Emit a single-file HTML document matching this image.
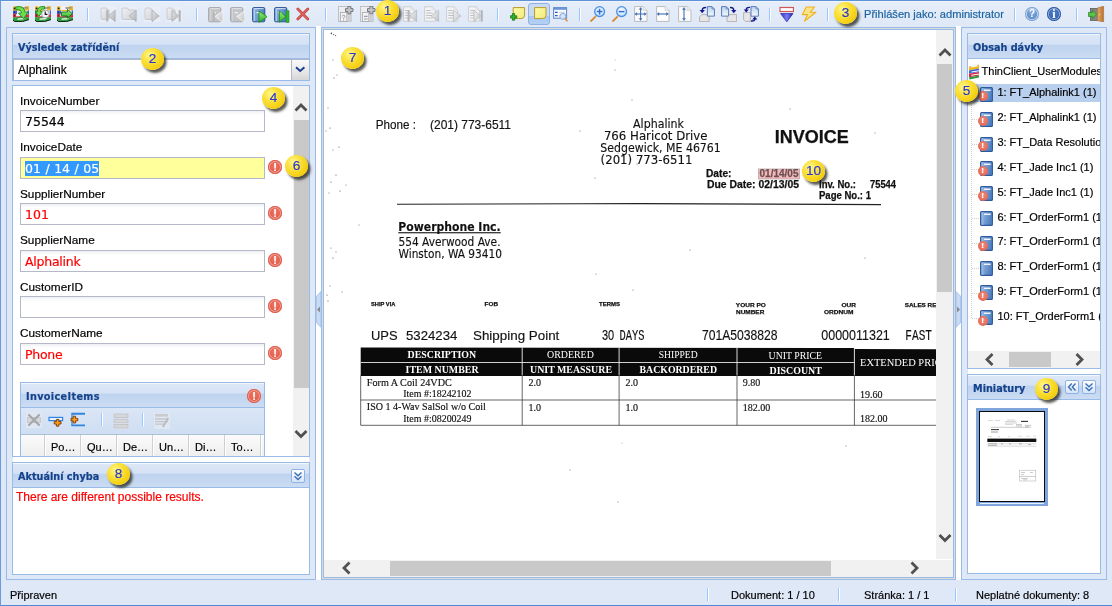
<!DOCTYPE html>
<html lang="cs">
<head>
<meta charset="utf-8">
<title>Thin Client</title>
<style>
*{box-sizing:border-box;margin:0;padding:0}
html,body{width:1112px;height:606px;overflow:hidden}
body{-webkit-text-stroke:.18px;background:#dfe8f6;font-family:"Liberation Sans",sans-serif;font-size:12px;color:#000;position:relative}
body>*{will-change:transform}
.abs{position:absolute}
#frame{position:absolute;left:0;top:0;width:1112px;height:606px;border-top:1px solid #5f93d8;border-left:1px solid #6a9bdc;border-bottom:1px solid #4f8ad2}
#tb{position:absolute;left:1px;top:1px;width:1111px;height:26px;background:linear-gradient(#f4f8fd 0,#e5edf9 1.5px,#dfe8f6 100%)}
.sep{position:absolute;top:8px;width:2px;height:13px;border-left:1px solid #98c8ff;border-right:1px solid #fff}
.ic{position:absolute;top:6px;width:16px;height:16px}
.region{position:absolute;border:1px solid #99bbe8;background:#dfe8f6}
.panel{position:absolute;border:1px solid #99bbe8;background:#fff}
.hd{position:absolute;left:0;top:0;right:0;height:25px;box-shadow:inset 0 1px 0 #f3f7fc;border-bottom:1px solid #99bbe8;background:linear-gradient(#dde8f7 0,#d5e2f5 42%,#bfd3ef 47%,#cbdcf3 100%);color:#15428b;font-family:"DejaVu Sans Condensed","DejaVu Sans","Liberation Sans",sans-serif;font-weight:bold;font-size:10.75px;line-height:27px;padding-left:5px;white-space:nowrap}
.lbl{position:absolute;left:20px;font-size:11.8px;line-height:14px;white-space:nowrap}
.inp{position:absolute;left:20px;width:245px;height:22px;border:1px solid #b5b8c8;background:linear-gradient(#eef0f3 0,#fff 4px);font-family:"DejaVu Sans","Liberation Sans",sans-serif;font-size:12.5px;line-height:21px;padding-left:4px;white-space:nowrap}
.red{color:#f00}
.err{position:absolute;width:14px;height:14px;border-radius:50%;background:radial-gradient(circle at 50% 40%,#ee7563,#dc4a38);box-shadow:inset 0 0 0 1px #e05a4a,inset 0 0 0 2px rgba(255,255,255,.4);color:#fff;font:bold 11px/14px "Liberation Sans",sans-serif;text-align:center}
.badge{position:absolute;z-index:50;width:23px;height:21.6px;border-radius:50%;background:radial-gradient(ellipse at 36% 32%,#fff68a 0,#fbe03a 35%,#f4cf10 70%,#dcae00 100%);box-shadow:2.5px 3px 2.5px rgba(25,25,20,.72);color:#2a38c2;font-size:13.6px;line-height:21px;text-align:center;-webkit-text-stroke:.2px #2a38c2;text-shadow:0 0 1.5px #fff8a0}
.tool{position:absolute;width:14px;height:14px;border:1px solid #8db2e3;border-radius:2px;background:linear-gradient(#fff,#d5e4f7)}
.st{position:absolute;top:589px;font-size:11px;line-height:13px;white-space:nowrap}
.ssep{position:absolute;top:588px;width:2px;height:13px;border-left:1px solid #98c8ff;border-right:1px solid #fff}
.tn{position:absolute;left:0;width:132px;height:25px;font-size:11px;line-height:25px;white-space:nowrap}
.tn span{position:absolute;left:30px;top:0}
.sel{background:#3399ff;color:#fff;display:inline-block;height:15px;line-height:15px;margin-top:3px;vertical-align:top;word-spacing:.55px}
.gsep{position:absolute;top:52px;width:2px;height:24px;border-left:1px solid #d0d0d0;border-right:1px solid #fff}
.gh{position:absolute;top:58px;font-size:11px;line-height:13px;white-space:nowrap}
.rnd{width:14px;height:14px;border-radius:50%;color:#fff;font:bold 10px/14px "Liberation Sans",sans-serif;text-align:center;-webkit-text-stroke:0}
.err2{position:absolute;width:10px;height:10px;border-radius:50%;background:radial-gradient(circle at 50% 40%,#f08c7a,#e05846);color:#fff;font:bold 8px/10px "Liberation Sans",sans-serif;text-align:center}
</style>
</head>
<body>
<div id="frame"></div>
<div id="tb"></div>
<!--TB-->
<svg width="0" height="0" style="position:absolute"><defs>
<linearGradient id="gGreen" x1="0" y1="0" x2="0" y2="1"><stop offset="0" stop-color="#9df07a"/><stop offset="1" stop-color="#2fae2f"/></linearGradient>
<linearGradient id="gGrey" x1="0" y1="0" x2="1" y2="1"><stop offset="0" stop-color="#f0f1f3"/><stop offset="1" stop-color="#cfd1d5"/></linearGradient>
<linearGradient id="gTri" x1="0" y1="0" x2="1" y2="1"><stop offset="0" stop-color="#e2e3e6"/><stop offset="1" stop-color="#b2b4b8"/></linearGradient>
<linearGradient id="gBook" x1="0" y1="0" x2="1" y2=".3"><stop offset="0" stop-color="#9bbde6"/><stop offset="1" stop-color="#4f7fc0"/></linearGradient>
<linearGradient id="gNote" x1="0" y1="0" x2="1" y2="1"><stop offset="0" stop-color="#fdfba8"/><stop offset="1" stop-color="#f1ea7a"/></linearGradient>
<linearGradient id="gPageB" x1="0" y1="0" x2="0" y2="1"><stop offset="0" stop-color="#b9d3ef"/><stop offset="1" stop-color="#f4f8fd"/></linearGradient>
<radialGradient id="gLens" cx=".5" cy=".4" r=".6"><stop offset="0" stop-color="#fff"/><stop offset="1" stop-color="#b9dcff"/></radialGradient>
<linearGradient id="gTriB" x1="0" y1="0" x2="1" y2="0"><stop offset="0" stop-color="#3434d8"/><stop offset=".5" stop-color="#7b7bf0"/><stop offset="1" stop-color="#2222b8"/></linearGradient>
<linearGradient id="gDoor" x1="0" y1="0" x2="1" y2="0"><stop offset="0" stop-color="#e2a866"/><stop offset="1" stop-color="#b87332"/></linearGradient>
<linearGradient id="gTriL" x1="0" y1="0" x2="1" y2="1"><stop offset="0" stop-color="#f4f4f5"/><stop offset="1" stop-color="#c0c2c5"/></linearGradient>
</defs></svg>
<svg class="abs" style="left:13px;top:6px" width="16" height="16" viewBox="0 0 16 16"><path d="M0 .4L4.6 .4L4.6 5.4H0Z" fill="#f0b41c"/><path d="M10 .2H16V4.4H10Z" fill="#eeb320"/><path d="M3.4 .1H12V4H3.4Z" fill="#f4f4f4"/><path d="M8 1.2L14.6 1V2.6L9 3Z" fill="#9a9488"/><path d="M4.6 4H10.4V5.2H4.6Z" fill="#f3bd2e"/>
<path d="M0 4.6H4V8.6H0Z" fill="#3a5fd6"/><path d="M14.6 4.4H16V8.4H14.6Z" fill="#3a5fd6"/><path d="M4 5.2H14.6V8.2H4Z" fill="#e9edf8"/>
<path d="M0 7.8H3.2V11.4H0Z" fill="#d72c42"/><path d="M12.6 8.4H16V11.6H12.6Z" fill="#d72c42"/><path d="M3 10.4L12.8 9.8V11.4L3 12Z" fill="#d93046"/><path d="M3.2 8.2H12.6V10H3.2Z" fill="#f4f0f2"/>
<path d="M0 11.2H16V13.6Q10 16.4 1.4 15.6L0 14Z" fill="#2ea03e"/><path d="M4.6 12.4L11.4 12V13.2L4.6 13.8Z" fill="#fff"/>
<path d="M0 13.8L1.4 15.6Q10 16.6 16 13.6" fill="none" stroke="#08200c" stroke-width="1"/>
<circle cx="1.6" cy="2.4" r=".9" fill="#1a1a1a"/><circle cx="1.5" cy="6.2" r=".6" fill="#112"/><circle cx="1.5" cy="9.8" r=".6" fill="#211"/><path d="M2.6 1Q10.8 -1.2 12.2 6.2L15.2 5.8L10.6 12.8L5.6 7.2L8.6 6.8Q8 3.2 3 3.8Z" fill="#6ade4c" stroke="#1c861c" stroke-width=".9"/></svg>
<svg class="abs" style="left:35px;top:6px" width="16" height="16" viewBox="0 0 16 16"><path d="M0 .4L4.6 .4L4.6 5.4H0Z" fill="#f0b41c"/><path d="M10 .2H16V4.4H10Z" fill="#eeb320"/><path d="M3.4 .1H12V4H3.4Z" fill="#f4f4f4"/><path d="M8 1.2L14.6 1V2.6L9 3Z" fill="#9a9488"/><path d="M4.6 4H10.4V5.2H4.6Z" fill="#f3bd2e"/>
<path d="M0 4.6H4V8.6H0Z" fill="#3a5fd6"/><path d="M14.6 4.4H16V8.4H14.6Z" fill="#3a5fd6"/><path d="M4 5.2H14.6V8.2H4Z" fill="#e9edf8"/>
<path d="M0 7.8H3.2V11.4H0Z" fill="#d72c42"/><path d="M12.6 8.4H16V11.6H12.6Z" fill="#d72c42"/><path d="M3 10.4L12.8 9.8V11.4L3 12Z" fill="#d93046"/><path d="M3.2 8.2H12.6V10H3.2Z" fill="#f4f0f2"/>
<path d="M0 11.2H16V13.6Q10 16.4 1.4 15.6L0 14Z" fill="#2ea03e"/><path d="M4.6 12.4L11.4 12V13.2L4.6 13.8Z" fill="#fff"/>
<path d="M0 13.8L1.4 15.6Q10 16.6 16 13.6" fill="none" stroke="#08200c" stroke-width="1"/>
<circle cx="1.6" cy="2.4" r=".9" fill="#1a1a1a"/><circle cx="1.5" cy="6.2" r=".6" fill="#112"/><circle cx="1.5" cy="9.8" r=".6" fill="#211"/><path d="M9.6 .6Q2.4 -.4 2.4 5.6L.2 5.6L3.8 10.4L7.4 5.6L5.2 5.6Q5.2 2.8 9.6 3Z" fill="#6ade4c" stroke="#1c861c" stroke-width=".9"/><circle cx="10.4" cy="8" r="3.8" fill="#f4f6f8" stroke="#9aa0a8" stroke-width=".9"/><path d="M10.2 5.6V8.4H12.4" fill="none" stroke="#111" stroke-width="1.1"/></svg>
<svg class="abs" style="left:57px;top:6px" width="16" height="16" viewBox="0 0 16 16"><path d="M0 .4L4.6 .4L4.6 5.4H0Z" fill="#f0b41c"/><path d="M10 .2H16V4.4H10Z" fill="#eeb320"/><path d="M3.4 .1H12V4H3.4Z" fill="#f4f4f4"/><path d="M8 1.2L14.6 1V2.6L9 3Z" fill="#9a9488"/><path d="M4.6 4H10.4V5.2H4.6Z" fill="#f3bd2e"/>
<path d="M0 4.6H4V8.6H0Z" fill="#3a5fd6"/><path d="M14.6 4.4H16V8.4H14.6Z" fill="#3a5fd6"/><path d="M4 5.2H14.6V8.2H4Z" fill="#e9edf8"/>
<path d="M0 7.8H3.2V11.4H0Z" fill="#d72c42"/><path d="M12.6 8.4H16V11.6H12.6Z" fill="#d72c42"/><path d="M3 10.4L12.8 9.8V11.4L3 12Z" fill="#d93046"/><path d="M3.2 8.2H12.6V10H3.2Z" fill="#f4f0f2"/>
<path d="M0 11.2H16V13.6Q10 16.4 1.4 15.6L0 14Z" fill="#2ea03e"/><path d="M4.6 12.4L11.4 12V13.2L4.6 13.8Z" fill="#fff"/>
<path d="M0 13.8L1.4 15.6Q10 16.6 16 13.6" fill="none" stroke="#08200c" stroke-width="1"/>
<circle cx="1.6" cy="2.4" r=".9" fill="#1a1a1a"/><circle cx="1.5" cy="6.2" r=".6" fill="#112"/><circle cx="1.5" cy="9.8" r=".6" fill="#211"/><path d="M4.4 6H10.4V3.4L15.4 7.7L10.4 12.2V10H4.4Z" fill="url(#gGreen)" stroke="#156a15" stroke-width=".9"/></svg>
<div class="sep" style="left:87px"></div>
<svg class="abs" style="left:99.6px;top:6px" width="16" height="16" viewBox="0 0 16 16"><rect width="16" height="16" fill="#e9eef7"/><path d="M1 3.2Q1 2 2.2 2H5.8Q6.8 2 7.2 3L7.6 4H9V12.5Q9 13.5 8 13.5H2.2Q1 13.5 1 12.3Z" fill="url(#gGrey)" stroke="#c3c5c9" stroke-width=".9"/><rect x="6.2" y="4.2" width="2" height="11.3" fill="#b3b5b9"/><path d="M15.2 4.2V15.6L8.2 9.9Z" fill="url(#gTri)" stroke="#a9abaf" stroke-width=".7"/></svg>
<svg class="abs" style="left:121.4px;top:6px" width="16" height="16" viewBox="0 0 16 16"><rect width="16" height="16" fill="#e9eef7"/><path d="M1 3.2Q1 2 2.2 2H5.8Q6.8 2 7.2 3L7.6 4H13.5Q14.6 4 14.6 5V12.5Q14.6 13.5 13.5 13.5H2.2Q1 13.5 1 12.3Z" fill="url(#gGrey)" stroke="#c3c5c9" stroke-width=".9"/><path d="M15.2 4.2V15.6L8 9.9Z" fill="url(#gTri)" stroke="#a9abaf" stroke-width=".7"/></svg>
<svg class="abs" style="left:143.6px;top:6px" width="16" height="16" viewBox="0 0 16 16"><rect width="16" height="16" fill="#e9eef7"/><path d="M1 3.2Q1 2 2.2 2H5.8Q6.8 2 7.2 3L7.6 4H9V12.5Q9 13.5 8 13.5H2.2Q1 13.5 1 12.3Z" fill="url(#gGrey)" stroke="#c3c5c9" stroke-width=".9"/><path d="M8 4.4V15.6L15.2 10Z" fill="url(#gTri)" stroke="#a9abaf" stroke-width=".7"/></svg>
<svg class="abs" style="left:166px;top:6px" width="16" height="16" viewBox="0 0 16 16"><rect width="16" height="16" fill="#e9eef7"/><path d="M1 3.2Q1 2 2.2 2H5.8Q6.8 2 7.2 3L7.6 4H9V12.5Q9 13.5 8 13.5H2.2Q1 13.5 1 12.3Z" fill="url(#gGrey)" stroke="#c3c5c9" stroke-width=".9"/><path d="M6 4.4V15.4L12.6 9.9Z" fill="url(#gTri)" stroke="#a9abaf" stroke-width=".7"/><rect x="12.6" y="4.2" width="2.2" height="11.4" fill="#b3b5b9"/></svg>
<div class="sep" style="left:196px"></div>
<svg class="abs" style="left:208px;top:7px" width="16" height="16" viewBox="0 0 16 16"><rect x=".6" y=".6" width="12.2" height="14.2" rx="1.2" fill="#c4c5c8" stroke="#a6a8ac" stroke-width="1"/><path d="M2.2 1.6H11.6" stroke="#f2f2f2" stroke-width=".8" stroke-opacity=".85"/><path d="M2.4 2.2V14" stroke="#d6d7da" stroke-width=".9"/><rect x="4.6" y="5" width="3.4" height="1.2" fill="#f2f2f2"/><rect x="4.8" y="4.6" width="1.8" height="10" fill="#b3b5b9"/><path d="M14.8 3.8V15.2L7 9.5Z" fill="url(#gTriL)" stroke="#f4f4f4" stroke-width=".8"/></svg>
<svg class="abs" style="left:230px;top:7px" width="16" height="16" viewBox="0 0 16 16"><rect x=".6" y=".6" width="12.2" height="14.2" rx="1.2" fill="#c4c5c8" stroke="#a6a8ac" stroke-width="1"/><path d="M2.2 1.6H11.6" stroke="#f2f2f2" stroke-width=".8" stroke-opacity=".85"/><path d="M2.4 2.2V14" stroke="#d6d7da" stroke-width=".9"/><rect x="4.6" y="5" width="3.4" height="1.2" fill="#f2f2f2"/><path d="M14.8 3.8V15.2L6.6 9.5Z" fill="url(#gTriL)" stroke="#f4f4f4" stroke-width=".8"/></svg>
<svg class="abs" style="left:252px;top:7px" width="16" height="16" viewBox="0 0 16 16"><rect x=".6" y=".6" width="12.2" height="14.2" rx="1.2" fill="url(#gBook)" stroke="#2a5292" stroke-width="1"/><path d="M2.2 1.6H11.6" stroke="#fff" stroke-width=".8" stroke-opacity=".85"/><path d="M2.4 2.2V14" stroke="#b5d0f0" stroke-width=".9"/><rect x="4.6" y="5" width="3.4" height="1.2" fill="#fff"/><path d="M7 4V15.4L15 9.7Z" fill="url(#gGreen)" stroke="#1c921c" stroke-width=".9"/></svg>
<svg class="abs" style="left:274px;top:7px" width="16" height="16" viewBox="0 0 16 16"><rect x=".6" y=".6" width="12.2" height="14.2" rx="1.2" fill="url(#gBook)" stroke="#2a5292" stroke-width="1"/><path d="M2.2 1.6H11.6" stroke="#fff" stroke-width=".8" stroke-opacity=".85"/><path d="M2.4 2.2V14" stroke="#b5d0f0" stroke-width=".9"/><rect x="4.6" y="5" width="3.4" height="1.2" fill="#fff"/><path d="M5.4 4V15.2L12 9.6Z" fill="url(#gGreen)" stroke="#1c921c" stroke-width=".9"/><rect x="12" y="3.8" width="3" height="11.6" fill="#2fb52f" stroke="#1f8a1f" stroke-width=".6"/></svg>
<svg class="abs" style="left:296px;top:7px" width="14" height="14" viewBox="0 0 14 14"><path d="M1.8 2L11.8 12M11.8 2L1.8 12" stroke="#bf4640" stroke-width="2.7" stroke-linecap="round"/><path d="M1.8 2L11.8 12M11.8 2L1.8 12" stroke="#e0625c" stroke-width="1.3" stroke-linecap="round"/></svg>
<div class="sep" style="left:325px"></div>
<svg class="abs" style="left:338px;top:6px" width="16" height="16" viewBox="0 0 16 16"><rect x=".5" y=".5" width="12.6" height="15" fill="#eceef2" stroke="#babcc0" stroke-width=".9"/><rect x="9.6" y="8" width="3.4" height="7.4" fill="#cdcfd3"/><rect x="2.4" y="6.4" width="6.4" height="9.1" fill="#f3f4f6" stroke="#aaacb0" stroke-width=".9"/><path d="M9.8 .3H12.7V2.6H15V5.5H12.7V7.8H9.8V5.5H7.5V2.6H9.8Z" fill="#c3c5c8" stroke="#77797c" stroke-width="1"/><path d="M4.2 10.4Q4.2 9.2 5.6 9.2Q7 9.2 7 10.4Q7 11.2 5.6 11.8V12.8" fill="none" stroke="#9a9ca0" stroke-width="1"/><rect x="5.1" y="13.6" width="1" height="1" fill="#9a9ca0"/></svg>
<svg class="abs" style="left:360px;top:6px" width="16" height="16" viewBox="0 0 16 16"><rect x=".5" y=".5" width="12.6" height="15" fill="#eceef2" stroke="#babcc0" stroke-width=".9"/><rect x="9.6" y="8" width="3.4" height="7.4" fill="#cdcfd3"/><rect x="2.4" y="6.4" width="6.4" height="9.1" fill="#f3f4f6" stroke="#aaacb0" stroke-width=".9"/><path d="M9.8 .3H12.7V2.6H15V5.5H12.7V7.8H9.8V5.5H7.5V2.6H9.8Z" fill="#c3c5c8" stroke="#77797c" stroke-width="1"/><path d="M4 10.4H7.6M4 13H7.6" stroke="#9a9ca0" stroke-width="1.2"/></svg>
<svg class="abs" style="left:402.6px;top:6px" width="16" height="16" viewBox="0 0 16 16"><path d="M.6 .8H8L11.4 4V15.2H.6Z" fill="#f3f4f6" stroke="#c9cbce" stroke-width=".9"/><path d="M8 .8V4H11.4" fill="none" stroke="#d4d6d9" stroke-width=".7"/><path d="M2.2 4.5H6.6M2.2 7H8.6M2.2 9.5H8.6M2.2 12H8.6" stroke="#b0b2b6" stroke-width=".8"/><rect x="4.6" y="4.4" width="2" height="11" fill="#b3b5b9"/><path d="M13.6 4.2V15.6L6.8 9.9Z" fill="url(#gTriL)" stroke="#b4b6ba" stroke-width=".7"/></svg>
<svg class="abs" style="left:424.2px;top:6px" width="16" height="16" viewBox="0 0 16 16"><path d="M.6 .8H8L11.4 4V15.2H.6Z" fill="#f3f4f6" stroke="#c9cbce" stroke-width=".9"/><path d="M8 .8V4H11.4" fill="none" stroke="#d4d6d9" stroke-width=".7"/><path d="M2.2 4.5H6.6M2.2 7H8.6M2.2 9.5H8.6M2.2 12H8.6" stroke="#b0b2b6" stroke-width=".8"/><path d="M14.6 4.2V15.6L7 9.9Z" fill="url(#gTriL)" stroke="#b4b6ba" stroke-width=".7"/></svg>
<svg class="abs" style="left:446.4px;top:6px" width="16" height="16" viewBox="0 0 16 16"><path d="M.6 .8H8L11.4 4V15.2H.6Z" fill="#f3f4f6" stroke="#c9cbce" stroke-width=".9"/><path d="M8 .8V4H11.4" fill="none" stroke="#d4d6d9" stroke-width=".7"/><path d="M2.2 4.5H6.6M2.2 7H8.6M2.2 9.5H8.6M2.2 12H8.6" stroke="#b0b2b6" stroke-width=".8"/><path d="M7.4 4.2V15.6L14.8 9.9Z" fill="url(#gTriL)" stroke="#b4b6ba" stroke-width=".7"/></svg>
<svg class="abs" style="left:468.4px;top:6px" width="16" height="16" viewBox="0 0 16 16"><path d="M.6 .8H8L11.4 4V15.2H.6Z" fill="#f3f4f6" stroke="#c9cbce" stroke-width=".9"/><path d="M8 .8V4H11.4" fill="none" stroke="#d4d6d9" stroke-width=".7"/><path d="M2.2 4.5H6.6M2.2 7H8.6M2.2 9.5H8.6M2.2 12H8.6" stroke="#b0b2b6" stroke-width=".8"/><path d="M6 4.2V15.6L12.6 9.9Z" fill="url(#gTriL)" stroke="#b4b6ba" stroke-width=".7"/><rect x="12.6" y="4.2" width="2.2" height="11.4" fill="#b3b5b9"/></svg>
<div class="sep" style="left:497px"></div>
<svg class="abs" style="left:510px;top:7px" width="16" height="16" viewBox="0 0 16 16"><g transform="translate(2.6,0)"><path d="M.6 .6H12V8.2Q12 11.6 8.4 11.6H.6Z" fill="url(#gNote)" stroke="#b99a2a" stroke-width="1"/></g><path d="M2.4 6.6H4.6V8.8H6.8V11H4.6V13.2H2.4V11H.2V8.8H2.4Z" fill="#35b035" stroke="#0f7a0f" stroke-width=".8"/></svg>
<div class="abs" style="left:528px;top:3px;width:22px;height:22px;border:1px solid #8fb1e6;border-radius:3px;background:linear-gradient(#c9dbf3 0,#c9dbf3 58%,#a9c9f2 60%,#b4d0f3 100%)"></div>
<svg class="abs" style="left:534px;top:7px" width="14" height="13" viewBox="0 0 14 13"><path d="M.6 .6H12V8.2Q12 11.6 8.4 11.6H.6Z" fill="url(#gNote)" stroke="#b99a2a" stroke-width="1"/></svg>
<svg class="abs" style="left:553px;top:7px" width="16" height="16" viewBox="0 0 16 16"><rect x=".6" y=".6" width="13" height="10.6" fill="#f6f9fd" stroke="#5e86c8" stroke-width="1"/><rect x=".6" y=".6" width="13" height="2.2" fill="#6d96d8"/><path d="M2 5.4H4.6M2 8.6H4.6" stroke="#2b55b8" stroke-width="1.3"/><path d="M6 5.4H12M6 8.6H8" stroke="#c9d3e2" stroke-width="1"/><circle cx="9.8" cy="9.4" r="3" fill="#cfe2f8" fill-opacity=".9" stroke="#8ea9cf" stroke-width="1"/><path d="M12.4 12L14 13.8" stroke="#dc8a3c" stroke-width="1.6" stroke-linecap="round"/></svg>
<div class="sep" style="left:579px"></div>
<svg class="abs" style="left:590px;top:6px" width="16" height="16" viewBox="0 0 16 16"><path d="M1 15L5.4 10.6" stroke="#e09a4a" stroke-width="2" stroke-linecap="round"/><path d="M1.4 15L5.4 11" stroke="#b86a22" stroke-width=".6"/><circle cx="9.6" cy="5.6" r="4.9" fill="url(#gLens)" stroke="#4b8fe0" stroke-width="1.3"/><path d="M6.8 5.6H12.4M9.6 2.8V8.4" stroke="#2f6fd0" stroke-width="1.5"/></svg>
<svg class="abs" style="left:612px;top:6px" width="16" height="16" viewBox="0 0 16 16"><path d="M1 15L5.4 10.6" stroke="#e09a4a" stroke-width="2" stroke-linecap="round"/><path d="M1.4 15L5.4 11" stroke="#b86a22" stroke-width=".6"/><circle cx="9.6" cy="5.6" r="4.9" fill="url(#gLens)" stroke="#4b8fe0" stroke-width="1.3"/><path d="M6.8 5.6H12.4" stroke="#2f6fd0" stroke-width="1.5"/></svg>
<svg class="abs" style="left:634px;top:6px" width="14" height="16" viewBox="0 0 14 16"><path d="M.6 .6H9L13 4.4V15.4H.6Z" fill="#fdfdfd" stroke="#b9bbbf" stroke-width="1"/><path d="M9 .6V4.4H13" fill="#ececec" stroke="#c9cbcf" stroke-width=".7"/><g stroke="#3f6fb4" stroke-width="1.1" fill="#3f6fb4"><path d="M6.6 2.4V13.6M1.6 8H11.6" fill="none"/><path d="M6.6 1.4L5.2 3.4H8ZM6.6 14.6L5.2 12.6H8ZM.8 8L2.8 6.6V9.4ZM12.4 8L10.4 6.6V9.4Z" stroke-width=".4"/></g></svg>
<svg class="abs" style="left:656px;top:6px" width="14" height="16" viewBox="0 0 14 16"><path d="M.6 .6H9L13 4.4V15.4H.6Z" fill="#fdfdfd" stroke="#b9bbbf" stroke-width="1"/><path d="M9 .6V4.4H13" fill="#ececec" stroke="#c9cbcf" stroke-width=".7"/><g stroke="#3f6fb4" stroke-width="1.1" fill="#3f6fb4"><path d="M2 8H11.4" fill="none"/><path d="M.9 8L3 6.5V9.5ZM12.5 8L10.4 6.5V9.5Z" stroke-width=".4"/></g></svg>
<svg class="abs" style="left:678px;top:6px" width="14" height="16" viewBox="0 0 14 16"><path d="M.6 .6H9L13 4.4V15.4H.6Z" fill="#fdfdfd" stroke="#b9bbbf" stroke-width="1"/><path d="M9 .6V4.4H13" fill="#ececec" stroke="#c9cbcf" stroke-width=".7"/><g stroke="#3f6fb4" stroke-width="1.1" fill="#3f6fb4"><path d="M6 2.6V13.4" fill="none"/><path d="M6 1.4L4.5 3.6H7.5ZM6 14.6L4.5 12.4H7.5Z" stroke-width=".4"/></g></svg>
<svg class="abs" style="left:699px;top:6px" width="16" height="16" viewBox="0 0 16 16"><path d="M2.8000000000000003 8.6H10.1V15.6H0.6V10.8Z" fill="#e6e6e6" stroke="#b4b4b4" stroke-width="1"/><path d="M8.4 0.6H13.0L15.4 3.0V10.1H8.4Z" fill="url(#gPageB)" stroke="#5a7bb8" stroke-width="1"/><path d="M13.0 0.6V3.0H15.4" fill="none" stroke="#5a7bb8" stroke-width=".7"/><path d="M7.2 1.6Q3.2 1.2 3.2 4.6" fill="none" stroke="#16168c" stroke-width="1.4"/><path d="M.6 4L5.8 4L3.2 7.2Z" fill="#16168c"/></svg>
<svg class="abs" style="left:721px;top:6px" width="16" height="16" viewBox="0 0 16 16"><path d="M8.2 8.6H15.6V15.6H6V10.8Z" fill="#e6e6e6" stroke="#b4b4b4" stroke-width="1"/><path d="M0.6 0.6H5.199999999999999L7.6 3.0V10.1H0.6Z" fill="url(#gPageB)" stroke="#5a7bb8" stroke-width="1"/><path d="M5.199999999999999 0.6V3.0H7.6" fill="none" stroke="#5a7bb8" stroke-width=".7"/><path d="M9 1.6Q12.8 1.2 12.8 4.6" fill="none" stroke="#16168c" stroke-width="1.4"/><path d="M10.2 4H15.4L12.8 7.2Z" fill="#16168c"/></svg>
<svg class="abs" style="left:743px;top:6px" width="16" height="16" viewBox="0 0 16 16"><path d="M.6 6.6H7.4V15.4H2.6L.6 13.4Z" fill="#e6e6e6" stroke="#b4b4b4" stroke-width="1"/><path d="M8 0.6H13.0L15.4 3.0V10.2H8Z" fill="url(#gPageB)" stroke="#5a7bb8" stroke-width="1"/><path d="M13.0 0.6V3.0H15.4" fill="none" stroke="#5a7bb8" stroke-width=".7"/><path d="M7 1.4Q3.2 1 3.2 4" fill="none" stroke="#16168c" stroke-width="1.4"/><path d="M.8 3.4H5.8L3.2 6.4Z" fill="#16168c"/><path d="M8 15Q11.8 15.4 11.8 13" fill="none" stroke="#16168c" stroke-width="1.4"/><path d="M9.2 13.4H14.4L11.8 10.4Z" fill="#16168c"/></svg>
<div class="sep" style="left:769px"></div>
<svg class="abs" style="left:779px;top:6px" width="16" height="17" viewBox="0 0 16 17"><rect x="1" y="1.4" width="13.4" height="4.2" fill="#fbe9e9" stroke="#cf4545" stroke-width="1"/><path d="M2 3.5H13.4" stroke="#fff" stroke-width="1.4"/><path d="M1.6 7.6H14L7.8 15.8Z" fill="url(#gTriB)" stroke="#1c1ca0" stroke-width=".7"/></svg>
<svg class="abs" style="left:801px;top:6px" width="16" height="16" viewBox="0 0 16 16"><path d="M5.2 1H13.6L9.4 6.2H15L3.4 15.2L6.6 8.6H1.4Z" fill="#fbe38a" stroke="#eeb321" stroke-width="1.1" stroke-linejoin="round"/></svg>
<div class="sep" style="left:827px"></div>
<div class="abs" style="left:864.4px;top:7px;font-size:11.1px;line-height:14px;color:#1a62a0;white-space:nowrap">Přihlášen jako: administrator</div>
<div class="sep" style="left:1014px"></div>
<div class="abs rnd" style="left:1025px;top:6.8px;background:radial-gradient(circle at 50% 35%,#86addc,#4a7cc0);box-shadow:inset 0 0 0 1px #7da2d6,inset 0 0 0 1.8px rgba(255,255,255,.7)">?</div>
<div class="abs rnd" style="left:1047px;top:6.8px;background:radial-gradient(circle at 50% 35%,#4f80c8,#2450a4);box-shadow:inset 0 0 0 1px #2a55a8,inset 0 0 0 1.8px rgba(255,255,255,.55);font-family:'Liberation Serif',serif;font-size:12px">i</div>
<div class="sep" style="left:1076px"></div>
<svg class="abs" style="left:1088px;top:6px" width="17" height="16" viewBox="0 0 17 16"><rect x="2.4" y="2.4" width="7.4" height="12" fill="#858585" stroke="#5e5e5e" stroke-width=".8"/><path d="M9.4 2L15.6 .2V16L9.4 14.6Z" fill="url(#gDoor)" stroke="#a86a2c" stroke-width=".6"/><circle cx="11.4" cy="8.6" r=".8" fill="#ffd84a"/><path d="M.4 6.4H4.4V4L8.4 8.4L4.4 12.8V10.4H.4Z" fill="#5cc24a" stroke="#2a8a2a" stroke-width=".8"/></svg>
<!--/TB-->

<!-- WEST -->
<div class="region" style="left:6px;top:27px;width:310px;height:553px"></div>
<div class="panel" style="left:12px;top:33px;width:298px;height:48px">
  <div class="hd">Výsledek zatřídění</div>
  <div class="abs" style="left:0;top:25px;width:296px;height:21px;border:1px solid #b5b8c8;border-width:1px 0 0 1px;background:#fff;font-size:12px;line-height:20px;padding-left:4px">Alphalink</div>
  <div class="abs" style="left:278px;top:26px;width:18px;height:20px;border-left:1px solid #b5b8c8;background:linear-gradient(#fafafa,#ececec 45%,#d6d6d6)"><svg width="17" height="20" viewBox="0 0 17 20"><path d="M4 7.2L8.2 11L12.4 7.2" fill="none" stroke="#1d3f8e" stroke-width="2"/></svg></div>
</div>
<div class="panel" id="form" style="left:12px;top:85px;width:298px;height:372px;overflow:hidden">
<!--FORM-->
<div class="lbl" style="left:7px;top:8px">InvoiceNumber</div>
<div class="inp" style="left:7px;top:24px">75544</div>
<div class="lbl" style="left:7px;top:54px">InvoiceDate</div>
<div class="inp" style="left:7px;top:71px;background:#ffff9c"><span class="sel">01 / 14 / 05</span></div>
<div class="err" style="left:255px;top:74px">!</div>
<div class="lbl" style="left:7px;top:101px">SupplierNumber</div>
<div class="inp red" style="left:7px;top:117px">101</div>
<div class="err" style="left:255px;top:120px">!</div>
<div class="lbl" style="left:7px;top:147px">SupplierName</div>
<div class="inp red" style="left:7px;top:164px;letter-spacing:-.25px">Alphalink</div>
<div class="err" style="left:255px;top:167px">!</div>
<div class="lbl" style="left:7px;top:194px">CustomerID</div>
<div class="inp" style="left:7px;top:210px"></div>
<div class="err" style="left:255px;top:213px">!</div>
<div class="lbl" style="left:7px;top:240px">CustomerName</div>
<div class="inp red" style="left:7px;top:257px;letter-spacing:-.25px">Phone</div>
<div class="err" style="left:255px;top:260px">!</div>
<div class="panel" style="left:7px;top:296px;width:245px;height:80px;overflow:hidden">
<div class="hd" style="letter-spacing:.35px">InvoiceItems</div>
<div class="err" style="left:226px;top:6px">!</div>
<div class="abs" style="left:0;top:25px;width:243px;height:27px;background:linear-gradient(#dbe6f6,#cfdef3);border-bottom:1px solid #a9bfd3"></div>
<svg class="abs" style="left:5px;top:29px" width="16" height="16" viewBox="0 0 16 16"><rect width="16" height="16" fill="#dfe7f3"/><path d="M1.5 5.5H14.5V10.5H1.5Z" fill="#d5d7da" stroke="#bfc1c5" stroke-width=".8"/><path d="M3 3L13 13M13 3L3 13" stroke="#a6a8ac" stroke-width="2.2" stroke-linecap="round"/></svg><svg class="abs" style="left:27px;top:29px" width="17" height="16" viewBox="0 0 17 16"><rect x="1" y="5.4" width="13.6" height="3.2" fill="#e8f1fc" stroke="#2f86e0" stroke-width="1.2"/><path d="M8.4 7.4H10.8V9.6H13V12H10.8V14.2H8.4V12H6.2V9.6H8.4Z" fill="#ff9a1a" stroke="#7a3a00" stroke-width=".9"/></svg><svg class="abs" style="left:47px;top:28px" width="19" height="18" viewBox="0 0 19 18"><path d="M3.4 2.8H17M3.4 14.4H17" stroke="#2f86e0" stroke-width="1.9"/><path d="M4 2.8V14.4" stroke="#2f86e0" stroke-width="1.2"/><path d="M5.2 5.2H7.6V7.4H9.8V9.8H7.6V12H5.2V9.8H3V7.4H5.2Z" fill="#ff9a1a" stroke="#7a3a00" stroke-width=".9"/></svg><svg class="abs" style="left:92px;top:29.600000000000023px" width="16" height="16" viewBox="0 0 16 16"><rect width="16" height="16" fill="#dfe7f3"/><rect x="1" y="1" width="14" height="3.6" fill="#d5d7da" stroke="#bfc1c5" stroke-width=".8"/><rect x="1" y="6.2" width="14" height="3.6" fill="#d5d7da" stroke="#bfc1c5" stroke-width=".8"/><rect x="1" y="11.4" width="14" height="3.6" fill="#d5d7da" stroke="#bfc1c5" stroke-width=".8"/></svg><svg class="abs" style="left:133px;top:29.600000000000023px" width="16" height="16" viewBox="0 0 16 16"><rect width="16" height="16" fill="#dfe7f3"/><rect x="1" y="1" width="13" height="2.6" fill="#c9cbcf"/><path d="M1 6H14M1 8.6H14M1 11.2H10" stroke="#c4c6ca" stroke-width="1.3"/><path d="M8 13.6L13.6 4.6L15 5.6L9.6 14.4Z" fill="#b9bbbf"/></svg>
<div class="sep" style="left:80px;top:30px"></div><div class="sep" style="left:121px;top:30px"></div>
<div class="abs" style="left:0;top:52px;width:243px;height:24px;background:linear-gradient(#fbfbfb,#ececec)"></div>
<div class="gsep" style="left:23px"></div><div class="gsep" style="left:59px"></div><div class="gsep" style="left:95px"></div><div class="gsep" style="left:131px"></div><div class="gsep" style="left:167px"></div><div class="gsep" style="left:203px"></div><div class="gsep" style="left:239px"></div><div class="gh" style="left:30px">Po…</div><div class="gh" style="left:66px">Qu…</div><div class="gh" style="left:102px">De…</div><div class="gh" style="left:138px">Un…</div><div class="gh" style="left:174px">Di…</div><div class="gh" style="left:210px">To…</div></div>
<div class="abs" style="left:280px;top:0;width:16px;height:370px;background:#f1f1f1"></div>
<div class="abs" style="left:280.5px;top:34px;width:15px;height:268px;background:#c9c9c9"></div>
<svg class="abs" style="left:280px;top:14px" width="16" height="14" viewBox="0 0 16 14"><path d="M2.5 10.5 L8 5 L13.5 10.5" fill="none" stroke="#505050" stroke-width="2.8"/></svg>
<svg class="abs" style="left:280px;top:341px" width="16" height="14" viewBox="0 0 16 14"><path d="M2.5 4 L8 9.5 L13.5 4" fill="none" stroke="#505050" stroke-width="2.8"/></svg>

<!--/FORM-->
</div>
<div class="panel" style="left:12px;top:462px;width:298px;height:113px">
  <div class="hd">Aktuální chyba</div>
  <div class="tool" style="left:278.4px;top:6px"><svg width="12" height="12" viewBox="0.5 0.5 12 12"><path d="M3 3L6.5 6.2L10 3M3 6.8L6.5 10L10 6.8" fill="none" stroke="#3a6fb8" stroke-width="1.4"/></svg></div>
  <div class="abs red" style="left:3px;top:27px;font-size:12px;line-height:14px">There are different possible results.</div>
</div>

<!-- CENTER -->
<div class="region" style="left:321px;top:27px;width:635px;height:553px;background:#dcdcdc"></div>
<div class="panel" id="doc" style="left:323px;top:29px;width:631px;height:549px;overflow:hidden">
<!--DOC-->
<svg class="abs" style="left:0;top:0" width="612" height="529" viewBox="324 30 612 529">
<text x="375.8" y="128.8" font-family="'Liberation Sans',sans-serif" font-size="12" font-weight="normal" fill="#111" textLength="40.2" lengthAdjust="spacingAndGlyphs" stroke="#111" stroke-width=".15">Phone :</text>
<text x="430" y="128.8" font-family="'Liberation Sans',sans-serif" font-size="12" font-weight="normal" fill="#111" textLength="81" lengthAdjust="spacingAndGlyphs" stroke="#111" stroke-width=".15">(201) 773-6511</text>
<text x="633" y="128" font-family="'DejaVu Sans','Liberation Sans',sans-serif" font-size="12.5" font-weight="normal" fill="#111" textLength="51" lengthAdjust="spacingAndGlyphs" stroke="#111" stroke-width=".15">Alphalink</text>
<text x="603.9" y="139.8" font-family="'DejaVu Sans','Liberation Sans',sans-serif" font-size="12.5" font-weight="normal" fill="#111" textLength="103.6" lengthAdjust="spacingAndGlyphs" stroke="#111" stroke-width=".15">766 Haricot Drive</text>
<text x="600.3" y="152" font-family="'DejaVu Sans','Liberation Sans',sans-serif" font-size="12.5" font-weight="normal" fill="#111" textLength="120.5" lengthAdjust="spacingAndGlyphs" stroke="#111" stroke-width=".15">Sedgewick, ME 46761</text>
<text x="600.6" y="164" font-family="'DejaVu Sans','Liberation Sans',sans-serif" font-size="12.5" font-weight="normal" fill="#111" textLength="91.8" lengthAdjust="spacingAndGlyphs" stroke="#111" stroke-width=".15">(201) 773-6511</text>
<text x="774.7" y="143" font-family="'Liberation Sans',sans-serif" font-size="18" font-weight="bold" fill="#111" textLength="74" lengthAdjust="spacingAndGlyphs" stroke="#111" stroke-width=".25">INVOICE</text>
<rect x="758.5" y="169" width="41" height="10" fill="#f6b9bb" stroke="#b9a7a7" stroke-width=".8"/>
<text x="706" y="176.6" font-family="'Liberation Sans',sans-serif" font-size="10.5" font-weight="bold" fill="#111" textLength="25.5" lengthAdjust="spacingAndGlyphs" stroke="#111" stroke-width=".25">Date:</text>
<text x="759.5" y="177.4" font-family="'Liberation Sans',sans-serif" font-size="10.5" font-weight="bold" fill="#6a4f52" textLength="39" lengthAdjust="spacingAndGlyphs" stroke="#6a4f52" stroke-width=".25">01/14/05</text>
<text x="707" y="188" font-family="'Liberation Sans',sans-serif" font-size="10.5" font-weight="bold" fill="#111" textLength="92" lengthAdjust="spacingAndGlyphs" stroke="#111" stroke-width=".25">Due Date: 02/13/05</text>
<text x="819" y="188" font-family="'Liberation Sans',sans-serif" font-size="10.5" font-weight="bold" fill="#111" textLength="37" lengthAdjust="spacingAndGlyphs" stroke="#111" stroke-width=".25">Inv. No.:</text>
<text x="870" y="188" font-family="'Liberation Sans',sans-serif" font-size="10.5" font-weight="bold" fill="#111" textLength="26" lengthAdjust="spacingAndGlyphs" stroke="#111" stroke-width=".25">75544</text>
<text x="819" y="199" font-family="'Liberation Sans',sans-serif" font-size="10.5" font-weight="bold" fill="#111" textLength="52" lengthAdjust="spacingAndGlyphs" stroke="#111" stroke-width=".25">Page No.: 1</text>
<path d="M397 204.3L640 203.6L881 204.6" stroke="#222" stroke-width="1.1" fill="none"/>
<text x="398.3" y="230.8" font-family="'DejaVu Sans','Liberation Sans',sans-serif" font-size="12" font-weight="bold" fill="#111" textLength="102.4" lengthAdjust="spacingAndGlyphs" stroke="#111" stroke-width=".15">Powerphone Inc.</text>
<rect x="398.3" y="232.2" width="102.4" height="1.1" fill="#111"/>
<text x="398.5" y="246" font-family="'DejaVu Sans','Liberation Sans',sans-serif" font-size="12.5" font-weight="normal" fill="#111" textLength="102" lengthAdjust="spacingAndGlyphs" stroke="#111" stroke-width=".15">554 Averwood Ave.</text>
<text x="398.5" y="257.6" font-family="'DejaVu Sans','Liberation Sans',sans-serif" font-size="12.5" font-weight="normal" fill="#111" textLength="103.5" lengthAdjust="spacingAndGlyphs" stroke="#111" stroke-width=".15">Winston, WA 93410</text>
<text x="371" y="305.8" font-family="'Liberation Sans',sans-serif" font-size="6.2" font-weight="bold" fill="#111" textLength="24.4" lengthAdjust="spacingAndGlyphs" stroke="#111" stroke-width=".25">SHIP VIA</text>
<text x="484.6" y="305.6" font-family="'Liberation Sans',sans-serif" font-size="6.2" font-weight="bold" fill="#111" textLength="13.4" lengthAdjust="spacingAndGlyphs" stroke="#111" stroke-width=".25">FOB</text>
<text x="599" y="306" font-family="'Liberation Sans',sans-serif" font-size="6.2" font-weight="bold" fill="#111" textLength="21" lengthAdjust="spacingAndGlyphs" stroke="#111" stroke-width=".25">TERMS</text>
<text x="735.8" y="306.6" font-family="'Liberation Sans',sans-serif" font-size="6.2" font-weight="bold" fill="#111" textLength="30" lengthAdjust="spacingAndGlyphs" stroke="#111" stroke-width=".25">YOUR PO</text>
<text x="736" y="314.2" font-family="'Liberation Sans',sans-serif" font-size="6.2" font-weight="bold" fill="#111" textLength="28.3" lengthAdjust="spacingAndGlyphs" stroke="#111" stroke-width=".25">NUMBER</text>
<text x="841.4" y="306.8" font-family="'Liberation Sans',sans-serif" font-size="6.2" font-weight="bold" fill="#111" textLength="14.6" lengthAdjust="spacingAndGlyphs" stroke="#111" stroke-width=".25">OUR</text>
<text x="824" y="314.4" font-family="'Liberation Sans',sans-serif" font-size="6.2" font-weight="bold" fill="#111" textLength="29.5" lengthAdjust="spacingAndGlyphs" stroke="#111" stroke-width=".25">ORDNUM</text>
<text x="904.7" y="307.4" font-family="'Liberation Sans',sans-serif" font-size="6.2" font-weight="bold" fill="#111" textLength="36" lengthAdjust="spacingAndGlyphs" stroke="#111" stroke-width=".25">SALES REP</text>
<text x="371" y="339.5" font-family="'Liberation Sans',sans-serif" font-size="13.3" font-weight="normal" fill="#111" textLength="26.6" lengthAdjust="spacingAndGlyphs" stroke="#111" stroke-width=".15">UPS</text>
<text x="406" y="339.5" font-family="'Liberation Sans',sans-serif" font-size="13.3" font-weight="normal" fill="#111" textLength="51.4" lengthAdjust="spacingAndGlyphs" stroke="#111" stroke-width=".15">5324234</text>
<text x="473" y="339.5" font-family="'Liberation Sans',sans-serif" font-size="13.3" font-weight="normal" fill="#111" textLength="86.3" lengthAdjust="spacingAndGlyphs" stroke="#111" stroke-width=".15">Shipping Point</text>
<text x="601.9" y="339.7" font-family="'Liberation Sans',sans-serif" font-size="15" font-weight="normal" fill="#111" textLength="12.2" lengthAdjust="spacingAndGlyphs" stroke="#111" stroke-width=".15">30</text>
<text x="619.6" y="339.7" font-family="'Liberation Mono',monospace" font-size="15.5" font-weight="normal" fill="#111" textLength="24.9" lengthAdjust="spacingAndGlyphs" stroke="#111" stroke-width=".15">DAYS</text>
<text x="701.9" y="339.6" font-family="'Liberation Sans',sans-serif" font-size="15" font-weight="normal" fill="#111" textLength="75.7" lengthAdjust="spacingAndGlyphs" stroke="#111" stroke-width=".15">701A5038828</text>
<text x="821.3" y="339.6" font-family="'Liberation Sans',sans-serif" font-size="15" font-weight="normal" fill="#111" textLength="68.5" lengthAdjust="spacingAndGlyphs" stroke="#111" stroke-width=".15">0000011321</text>
<text x="905.3" y="339.6" font-family="'Liberation Mono',monospace" font-size="15.5" font-weight="normal" fill="#111" textLength="26.7" lengthAdjust="spacingAndGlyphs" stroke="#111" stroke-width=".15">FAST</text>
<path d="M360.7 347.5L854.4 348V348.9L940 349.2V376H360.7Z" fill="#0a0a0a"/>
<path d="M360.7 362.5H854.4" stroke="#e8e8e8" stroke-width=".9"/>
<path d="M522.2 347.5V375.5" stroke="#f0f0f0" stroke-width=".9"/>
<path d="M522.2 375.5V425.3" stroke="#333" stroke-width=".75"/>
<path d="M619.1 347.5V375.5" stroke="#f0f0f0" stroke-width=".9"/>
<path d="M619.1 375.5V425.3" stroke="#333" stroke-width=".75"/>
<path d="M737 347.5V375.5" stroke="#f0f0f0" stroke-width=".9"/>
<path d="M737 375.5V425.3" stroke="#333" stroke-width=".75"/>
<path d="M854.4 347.5V375.5" stroke="#f0f0f0" stroke-width=".9"/>
<path d="M854.4 375.5V425.3" stroke="#333" stroke-width=".75"/>
<path d="M360.7 375.5V425.3" stroke="#333" stroke-width=".75"/>
<path d="M360.7 400H940M360.7 425.3H940" stroke="#333" stroke-width=".75"/>
<text x="407.6" y="358.2" font-family="'Liberation Serif',serif" font-size="10" font-weight="bold" fill="#fff" textLength="68.5" lengthAdjust="spacingAndGlyphs">DESCRIPTION</text>
<text x="547" y="358.2" font-family="'Liberation Serif',serif" font-size="10" font-weight="normal" fill="#fff" textLength="46.8" lengthAdjust="spacingAndGlyphs">ORDERED</text>
<text x="658.7" y="358.4" font-family="'Liberation Serif',serif" font-size="10" font-weight="normal" fill="#fff" textLength="39" lengthAdjust="spacingAndGlyphs">SHIPPED</text>
<text x="768.6" y="358.8" font-family="'Liberation Serif',serif" font-size="10" font-weight="normal" fill="#fff" textLength="53.5" lengthAdjust="spacingAndGlyphs">UNIT PRICE</text>
<text x="405.6" y="373" font-family="'Liberation Serif',serif" font-size="10" font-weight="bold" fill="#fff" textLength="73" lengthAdjust="spacingAndGlyphs">ITEM NUMBER</text>
<text x="530" y="373.2" font-family="'Liberation Serif',serif" font-size="10" font-weight="bold" fill="#fff" textLength="82" lengthAdjust="spacingAndGlyphs">UNIT MEASSURE</text>
<text x="639.5" y="373.4" font-family="'Liberation Serif',serif" font-size="10" font-weight="bold" fill="#fff" textLength="77.5" lengthAdjust="spacingAndGlyphs">BACKORDERED</text>
<text x="769.5" y="373.6" font-family="'Liberation Serif',serif" font-size="10" font-weight="bold" fill="#fff" textLength="52.4" lengthAdjust="spacingAndGlyphs">DISCOUNT</text>
<text x="860" y="365.6" font-family="'Liberation Serif',serif" font-size="10" font-weight="normal" fill="#fff" textLength="88" lengthAdjust="spacingAndGlyphs">EXTENDED PRICE</text>
<text x="366.8" y="385.5" font-family="'Liberation Serif',serif" font-size="10" font-weight="normal" fill="#111" textLength="85" lengthAdjust="spacingAndGlyphs" stroke="#111" stroke-width=".15">Form A Coil 24VDC</text>
<text x="403.3" y="396.7" font-family="'Liberation Serif',serif" font-size="10" font-weight="normal" fill="#111" textLength="68.2" lengthAdjust="spacingAndGlyphs" stroke="#111" stroke-width=".15">Item #:18242102</text>
<text x="528.5" y="385.5" font-family="'Liberation Serif',serif" font-size="10" font-weight="normal" fill="#111" stroke="#111" stroke-width=".15">2.0</text>
<text x="625.5" y="385.5" font-family="'Liberation Serif',serif" font-size="10" font-weight="normal" fill="#111" stroke="#111" stroke-width=".15">2.0</text>
<text x="742.7" y="385.8" font-family="'Liberation Serif',serif" font-size="10" font-weight="normal" fill="#111" stroke="#111" stroke-width=".15">9.80</text>
<text x="860" y="398" font-family="'Liberation Serif',serif" font-size="10" font-weight="normal" fill="#111" stroke="#111" stroke-width=".15">19.60</text>
<text x="366.8" y="410.3" font-family="'Liberation Serif',serif" font-size="10" font-weight="normal" fill="#111" textLength="119" lengthAdjust="spacingAndGlyphs" stroke="#111" stroke-width=".15">ISO 1 4-Wav SalSol w/o Coil</text>
<text x="403.3" y="421.7" font-family="'Liberation Serif',serif" font-size="10" font-weight="normal" fill="#111" textLength="68.2" lengthAdjust="spacingAndGlyphs" stroke="#111" stroke-width=".15">Item #:08200249</text>
<text x="528.5" y="410.5" font-family="'Liberation Serif',serif" font-size="10" font-weight="normal" fill="#111" stroke="#111" stroke-width=".15">1.0</text>
<text x="625.5" y="410.5" font-family="'Liberation Serif',serif" font-size="10" font-weight="normal" fill="#111" stroke="#111" stroke-width=".15">1.0</text>
<text x="742.7" y="410.8" font-family="'Liberation Serif',serif" font-size="10" font-weight="normal" fill="#111" stroke="#111" stroke-width=".15">182.00</text>
<text x="860" y="422.4" font-family="'Liberation Serif',serif" font-size="10" font-weight="normal" fill="#111" stroke="#111" stroke-width=".15">182.00</text>
<circle cx="331.4" cy="33.4" r="0.8" fill="#555"/>
<circle cx="333.5" cy="34.6" r="0.7" fill="#555"/>
<circle cx="335.6" cy="35.6" r="0.6" fill="#555"/>
<circle cx="333" cy="60" r="0.5" fill="#555"/>
<circle cx="337" cy="75" r="0.5" fill="#555"/>
<circle cx="334" cy="78" r="0.6" fill="#555"/>
<circle cx="328" cy="108" r="0.5" fill="#555"/>
<circle cx="330" cy="128" r="0.6" fill="#555"/>
<circle cx="326" cy="131" r="0.5" fill="#555"/>
<circle cx="339" cy="147" r="0.6" fill="#555"/>
<circle cx="333" cy="150" r="0.5" fill="#555"/>
<circle cx="336" cy="175" r="0.6" fill="#555"/>
<circle cx="331" cy="182" r="0.6" fill="#555"/>
<circle cx="346" cy="185" r="0.5" fill="#555"/>
<circle cx="340" cy="191" r="0.6" fill="#555"/>
<circle cx="329" cy="193" r="0.5" fill="#555"/>
<circle cx="359" cy="225" r="0.5" fill="#555"/>
<circle cx="331" cy="248" r="0.5" fill="#555"/>
<circle cx="336" cy="252" r="0.5" fill="#555"/>
<circle cx="333" cy="258" r="0.6" fill="#555"/>
<circle cx="330" cy="286" r="0.5" fill="#555"/>
<circle cx="327" cy="295" r="0.6" fill="#555"/>
<circle cx="342" cy="292" r="0.5" fill="#555"/>
<circle cx="328" cy="301" r="0.6" fill="#555"/>
<circle cx="615" cy="70" r="0.5" fill="#555"/>
<circle cx="595" cy="178" r="0.5" fill="#555"/>
<circle cx="690" cy="250" r="0.5" fill="#555"/>
<circle cx="790" cy="109" r="0.5" fill="#555"/>
<circle cx="875" cy="133" r="0.5" fill="#555"/>
<circle cx="618" cy="153" r="0.5" fill="#555"/>
<circle cx="580" cy="131" r="0.5" fill="#555"/>
<circle cx="865" cy="258" r="0.5" fill="#555"/>
<circle cx="633" cy="290" r="0.5" fill="#555"/>
<circle cx="596" cy="274" r="0.5" fill="#555"/>
<circle cx="637" cy="164" r="0.5" fill="#555"/>
<circle cx="632" cy="100" r="0.5" fill="#555"/>
<circle cx="618" cy="502" r="0.5" fill="#555"/>
<circle cx="570" cy="470" r="0.5" fill="#555"/>
<circle cx="846" cy="446" r="0.5" fill="#555"/>
<circle cx="622" cy="443" r="0.4" fill="#555"/>
<circle cx="615" cy="60" r="0.4" fill="#555"/>
</svg>
<div class="abs" style="left:612px;top:0px;width:17px;height:529px;background:#f1f1f1"></div>
<div class="abs" style="left:613px;top:34px;width:15px;height:228px;background:#c9c9c9"></div>
<div class="abs" style="left:0px;top:530px;width:629px;height:17px;background:#f1f1f1"></div>
<div class="abs" style="left:66px;top:531px;width:441px;height:15px;background:#c9c9c9"></div>
<svg class="abs" style="left:613px;top:15px" width="16" height="14" viewBox="0 0 16 14"><path d="M2.5 10.5L8 5L13.5 10.5" fill="none" stroke="#505050" stroke-width="2.8"/></svg>
<svg class="abs" style="left:613px;top:501px" width="16" height="14" viewBox="0 0 16 14"><path d="M2.5 4L8 9.5L13.5 4" fill="none" stroke="#505050" stroke-width="2.8"/></svg>
<svg class="abs" style="left:16px;top:530px" width="14" height="16" viewBox="0 0 14 16"><path d="M9.5 2.5L4 8L9.5 13.5" fill="none" stroke="#505050" stroke-width="2.8"/></svg>
<svg class="abs" style="left:583px;top:530px" width="14" height="16" viewBox="0 0 14 16"><path d="M4.5 2.5L10 8L4.5 13.5" fill="none" stroke="#505050" stroke-width="2.8"/></svg>
<!--/DOC-->
</div>

<!-- EAST -->
<div class="region" style="left:961px;top:27px;width:146px;height:553px"></div>
<div class="panel" id="batch" style="left:967px;top:33px;width:134px;height:336px;overflow:hidden">
  <div class="hd">Obsah dávky</div>
<!--TREE-->
<div class="abs" style="left:0;top:50px;width:132px;height:18px;background:#b9cfee"></div>
<svg class="abs" style="left:0;top:30px" width="12" height="16" viewBox="0 0 12 16"><path d="M1 2.4L11 .6V4.6L1 6.4Z" fill="#f2b51d"/><path d="M3 1.2L9.4 .2V2.4L3 3.4Z" fill="#f6f6f6"/><path d="M1 6.4L11 4.6V8L1 9.8Z" fill="#3c62d8"/><path d="M3.4 7.4L11 6.2V7.2L3.4 8.4Z" fill="#fff"/><path d="M1 9.8L11 8V11.4L1 13.2Z" fill="#d92a40"/><path d="M3.4 10.8L11 9.6V10.6L3.4 11.8Z" fill="#fff"/><path d="M1 13.2L11 11.4V13.6L1.6 15.6Z" fill="#2b9c3b"/></svg>
<div class="abs" style="left:13.600000000000023px;top:30px;font-size:11px;line-height:14px;white-space:nowrap">ThinClient_UserModules</div>
<div class="abs" style="left:3px;top:71px;width:0;height:213px;border-left:1px dotted #cfcfcf"></div>
<svg class="abs" style="left:12px;top:53.0px" width="13" height="15" viewBox="0 0 13 15"><rect x=".6" y=".6" width="11.8" height="13.8" rx="1" fill="url(#gBook)" stroke="#2d5a9e" stroke-width="1.1"/><path d="M2.8 1V14" stroke="#9fc0ea" stroke-width=".9"/><rect x="4" y="2.6" width="6.6" height="1.3" fill="#fff"/></svg>
<div class="err2" style="left:9.5px;top:57.4px">!</div>
<div class="abs" style="left:29.399999999999977px;top:51.0px;font-size:11px;line-height:14px;white-space:nowrap">1: FT_Alphalink1 (1)</div>
<div class="abs" style="left:4px;top:84.8px;width:7px;height:0;border-top:1px dotted #cfcfcf"></div>
<svg class="abs" style="left:12px;top:77.8px" width="13" height="15" viewBox="0 0 13 15"><rect x=".6" y=".6" width="11.8" height="13.8" rx="1" fill="url(#gBook)" stroke="#2d5a9e" stroke-width="1.1"/><path d="M2.8 1V14" stroke="#9fc0ea" stroke-width=".9"/><rect x="4" y="2.6" width="6.6" height="1.3" fill="#fff"/></svg>
<div class="err2" style="left:9.5px;top:82.3px">!</div>
<div class="abs" style="left:29.399999999999977px;top:75.9px;font-size:11px;line-height:14px;white-space:nowrap">2: FT_Alphalink1 (1)</div>
<div class="abs" style="left:4px;top:109.7px;width:7px;height:0;border-top:1px dotted #cfcfcf"></div>
<svg class="abs" style="left:12px;top:102.6px" width="13" height="15" viewBox="0 0 13 15"><rect x=".6" y=".6" width="11.8" height="13.8" rx="1" fill="url(#gBook)" stroke="#2d5a9e" stroke-width="1.1"/><path d="M2.8 1V14" stroke="#9fc0ea" stroke-width=".9"/><rect x="4" y="2.6" width="6.6" height="1.3" fill="#fff"/></svg>
<div class="err2" style="left:9.5px;top:107.2px">!</div>
<div class="abs" style="left:29.399999999999977px;top:100.8px;font-size:11px;line-height:14px;white-space:nowrap">3: FT_Data Resolutions</div>
<div class="abs" style="left:4px;top:134.6px;width:7px;height:0;border-top:1px dotted #cfcfcf"></div>
<svg class="abs" style="left:12px;top:127.4px" width="13" height="15" viewBox="0 0 13 15"><rect x=".6" y=".6" width="11.8" height="13.8" rx="1" fill="url(#gBook)" stroke="#2d5a9e" stroke-width="1.1"/><path d="M2.8 1V14" stroke="#9fc0ea" stroke-width=".9"/><rect x="4" y="2.6" width="6.6" height="1.3" fill="#fff"/></svg>
<div class="err2" style="left:9.5px;top:132.1px">!</div>
<div class="abs" style="left:29.399999999999977px;top:125.7px;font-size:11px;line-height:14px;white-space:nowrap">4: FT_Jade Inc1 (1)</div>
<div class="abs" style="left:4px;top:159.5px;width:7px;height:0;border-top:1px dotted #cfcfcf"></div>
<svg class="abs" style="left:12px;top:152.2px" width="13" height="15" viewBox="0 0 13 15"><rect x=".6" y=".6" width="11.8" height="13.8" rx="1" fill="url(#gBook)" stroke="#2d5a9e" stroke-width="1.1"/><path d="M2.8 1V14" stroke="#9fc0ea" stroke-width=".9"/><rect x="4" y="2.6" width="6.6" height="1.3" fill="#fff"/></svg>
<div class="err2" style="left:9.5px;top:157.0px">!</div>
<div class="abs" style="left:29.399999999999977px;top:150.6px;font-size:11px;line-height:14px;white-space:nowrap">5: FT_Jade Inc1 (1)</div>
<div class="abs" style="left:4px;top:184.4px;width:7px;height:0;border-top:1px dotted #cfcfcf"></div>
<svg class="abs" style="left:12px;top:177.0px" width="13" height="15" viewBox="0 0 13 15"><rect x=".6" y=".6" width="11.8" height="13.8" rx="1" fill="url(#gBook)" stroke="#2d5a9e" stroke-width="1.1"/><path d="M2.8 1V14" stroke="#9fc0ea" stroke-width=".9"/><rect x="4" y="2.6" width="6.6" height="1.3" fill="#fff"/></svg>
<div class="abs" style="left:29.399999999999977px;top:175.5px;font-size:11px;line-height:14px;white-space:nowrap">6: FT_OrderForm1 (1)</div>
<div class="abs" style="left:4px;top:209.3px;width:7px;height:0;border-top:1px dotted #cfcfcf"></div>
<svg class="abs" style="left:12px;top:201.8px" width="13" height="15" viewBox="0 0 13 15"><rect x=".6" y=".6" width="11.8" height="13.8" rx="1" fill="url(#gBook)" stroke="#2d5a9e" stroke-width="1.1"/><path d="M2.8 1V14" stroke="#9fc0ea" stroke-width=".9"/><rect x="4" y="2.6" width="6.6" height="1.3" fill="#fff"/></svg>
<div class="err2" style="left:9.5px;top:206.8px">!</div>
<div class="abs" style="left:29.399999999999977px;top:200.4px;font-size:11px;line-height:14px;white-space:nowrap">7: FT_OrderForm1 (1)</div>
<div class="abs" style="left:4px;top:234.2px;width:7px;height:0;border-top:1px dotted #cfcfcf"></div>
<svg class="abs" style="left:12px;top:226.6px" width="13" height="15" viewBox="0 0 13 15"><rect x=".6" y=".6" width="11.8" height="13.8" rx="1" fill="url(#gBook)" stroke="#2d5a9e" stroke-width="1.1"/><path d="M2.8 1V14" stroke="#9fc0ea" stroke-width=".9"/><rect x="4" y="2.6" width="6.6" height="1.3" fill="#fff"/></svg>
<div class="abs" style="left:29.399999999999977px;top:225.3px;font-size:11px;line-height:14px;white-space:nowrap">8: FT_OrderForm1 (1)</div>
<div class="abs" style="left:4px;top:259.1px;width:7px;height:0;border-top:1px dotted #cfcfcf"></div>
<svg class="abs" style="left:12px;top:251.4px" width="13" height="15" viewBox="0 0 13 15"><rect x=".6" y=".6" width="11.8" height="13.8" rx="1" fill="url(#gBook)" stroke="#2d5a9e" stroke-width="1.1"/><path d="M2.8 1V14" stroke="#9fc0ea" stroke-width=".9"/><rect x="4" y="2.6" width="6.6" height="1.3" fill="#fff"/></svg>
<div class="err2" style="left:9.5px;top:256.6px">!</div>
<div class="abs" style="left:29.399999999999977px;top:250.2px;font-size:11px;line-height:14px;white-space:nowrap">9: FT_OrderForm1 (1)</div>
<div class="abs" style="left:4px;top:284.0px;width:7px;height:0;border-top:1px dotted #cfcfcf"></div>
<svg class="abs" style="left:12px;top:276.2px" width="13" height="15" viewBox="0 0 13 15"><rect x=".6" y=".6" width="11.8" height="13.8" rx="1" fill="url(#gBook)" stroke="#2d5a9e" stroke-width="1.1"/><path d="M2.8 1V14" stroke="#9fc0ea" stroke-width=".9"/><rect x="4" y="2.6" width="6.6" height="1.3" fill="#fff"/></svg>
<div class="err2" style="left:9.5px;top:281.5px">!</div>
<div class="abs" style="left:29.399999999999977px;top:275.1px;font-size:11px;line-height:14px;white-space:nowrap">10: FT_OrderForm1 (1)</div>
<div class="abs" style="left:0px;top:317px;width:132px;height:17px;background:#f1f1f1"></div>
<div class="abs" style="left:41px;top:318px;width:42px;height:15px;background:#c9c9c9"></div>
<svg class="abs" style="left:15px;top:317px" width="14" height="16" viewBox="0 0 14 16"><path d="M9.5 3L4 8.5L9.5 14" fill="none" stroke="#505050" stroke-width="2.8"/></svg>
<svg class="abs" style="left:104px;top:317px" width="14" height="16" viewBox="0 0 14 16"><path d="M4.5 3L10 8.5L4.5 14" fill="none" stroke="#505050" stroke-width="2.8"/></svg>
<!--/TREE-->
</div>
<div class="panel" id="thumbs" style="left:967px;top:374px;width:134px;height:200px;overflow:hidden">
  <div class="hd">Miniatury</div>
<!--TH-->
<div class="tool" style="left:97.40000000000009px;top:5.199999999999989px"><svg width="12" height="12" viewBox="0.5 0.5 12 12"><path d="M6.2 3L3 6.5L6.2 10M10 3L6.8 6.5L10 10" fill="none" stroke="#3a6fb8" stroke-width="1.4"/></svg></div>
<div class="tool" style="left:114.40000000000009px;top:5.199999999999989px"><svg width="12" height="12" viewBox="0.5 0.5 12 12"><path d="M3 3L6.5 6.2L10 3M3 6.8L6.5 10L10 6.8" fill="none" stroke="#3a6fb8" stroke-width="1.4"/></svg></div>
<div class="abs" style="left:8px;top:33px;width:72px;height:98px;background:#7ea6dd"></div>
<div class="abs" style="left:12px;top:128px;width:64px;height:1px;background:#e8eef8"></div>
<div class="abs" style="left:11.399999999999977px;top:36.39999999999998px;width:65.4px;height:90.6px;background:#fff;border:1.3px solid #0a0a0a"></div>
<svg class="abs" style="left:12px;top:37px" width="64" height="89" viewBox="980 412 64 89">
<rect x="987.3" y="438.6" width="49" height="3.4" fill="#111"/>
<path d="M990.5 427.3H1031" stroke="#999" stroke-width=".5"/>
<rect x="1019.4" y="470.2" width="16.4" height="10.8" fill="none" stroke="#aaa" stroke-width=".5"/>
<path d="M1019.4 476.4H1035.8M1021 472.5H1025M1030 472.5H1033M1021 474.5H1024M1021 478.4H1028M1023 479.8H1027" stroke="#999" stroke-width=".5"/>
<path d="M991 429.6H999" stroke="#333" stroke-width="1"/><path d="M991 431.4H998M991 432.6H998" stroke="#999" stroke-width=".5"/>
<path d="M1021 421.4H1028" stroke="#333" stroke-width="1.1"/>
<path d="M1007 420H1015M1005 421.5H1016M1005 423H1017M1005 424.4H1013" stroke="#aaa" stroke-width=".5"/>
<path d="M988 420.6H993M995 420.6H1000" stroke="#aaa" stroke-width=".5"/>
<path d="M1016 424.6H1022M1016 426H1022M1025 425.4H1031M1025 426.8H1029" stroke="#888" stroke-width=".5"/>
<path d="M988 436.6H992M998 436.6H1000M1008 436.6H1010M1018 436.2H1022M1026 436.2H1030M1033 436.2H1036" stroke="#bbb" stroke-width=".5"/>
<path d="M987.3 443.4H1036.3M987.3 445H1036.3M987.3 446.6H1036.3" stroke="#bbb" stroke-width=".4"/>
<path d="M988 443.8H997M988 445.4H997M1001 443.8H1003M1009 443.8H1011M1019 443.8H1022M1028 444.4H1031" stroke="#777" stroke-width=".5"/>
</svg>
<!--/TH-->
</div>

<!--BADGES-->
<div class="badge" style="left:376.2px;top:0.0px">1</div>
<div class="badge" style="left:141.2px;top:48.0px">2</div>
<div class="badge" style="left:834.0px;top:1.7px">3</div>
<div class="badge" style="left:262.0px;top:87.0px">4</div>
<div class="badge" style="left:954.5px;top:80.0px">5</div>
<div class="badge" style="left:284.5px;top:155.0px">6</div>
<div class="badge" style="left:340.5px;top:47.0px">7</div>
<div class="badge" style="left:106.5px;top:463.0px">8</div>
<div class="badge" style="left:1034.5px;top:377.5px">9</div>
<div class="badge" style="left:801.5px;top:160.0px">10</div>
<!--/BADGES-->
<!--SPLIT-->
<div class="abs" style="left:316px;top:26px;width:5px;height:554px;background:#fff"></div>
<div class="abs" style="left:956px;top:26px;width:5px;height:554px;background:#fff"></div>
<div class="abs" style="left:968px;top:369px;width:132px;height:5px;background:#fff"></div>
<div class="abs" style="left:13px;top:457px;width:296px;height:5px;background:#fff"></div>
<svg class="abs" style="left:316px;top:291px" width="5" height="37" viewBox="0 0 5 37"><path d="M5 .6L.4 5.2V31.6L5 36.4Z" fill="#c8daf4" stroke="#9dbde9" stroke-width=".8"/><path d="M4 15.6V21.6L1 18.6Z" fill="#8a8a8a"/></svg>
<svg class="abs" style="left:956px;top:291px" width="5" height="37" viewBox="0 0 5 37"><path d="M0 .6L4.6 5.2V31.6L0 36.4Z" fill="#c8daf4" stroke="#9dbde9" stroke-width=".8"/><path d="M1 15.6V21.6L4 18.6Z" fill="#8a8a8a"/></svg>
<!--/SPLIT-->
<!-- STATUS -->
<div class="st" style="left:10px">Připraven</div>
<div class="ssep" style="left:707px"></div>
<div class="st" style="left:731px">Dokument: 1 / 10</div>
<div class="ssep" style="left:838px"></div>
<div class="st" style="left:864px">Stránka: 1 / 1</div>
<div class="ssep" style="left:955px"></div>
<div class="st" style="left:976px">Neplatné dokumenty: 8</div>
</body>
</html>
